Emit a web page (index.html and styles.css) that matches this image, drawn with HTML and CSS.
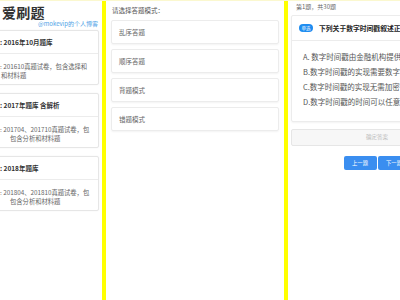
FILE: index.html
```html
<!DOCTYPE html>
<html lang="zh">
<head>
<meta charset="utf-8">
<title>爱刷题</title>
<link rel="stylesheet" href="styles.css">
</head>
<body>
<div class="screens">
  <section class="panel panel-home">
    <h1 class="app-title">爱刷题</h1>
    <div class="blog-link">@mokevip的个人博客</div>
    <div class="bank-card">
      <div class="bank-head">: 2016年10月题库</div>
      <div class="bank-body">
        <div class="line">: 201610真题试卷，包含选择和</div>
        <div class="line">和材料题</div>
      </div>
    </div>
    <div class="bank-card">
      <div class="bank-head">: 2017年题库 含解析</div>
      <div class="bank-body">
        <div class="line">: 201704、201710真题试卷，包</div>
        <div class="line indent">包含分析和材料题</div>
      </div>
    </div>
    <div class="bank-card">
      <div class="bank-head">: 2018年题库</div>
      <div class="bank-body">
        <div class="line">: 201804、201810真题试卷，包</div>
        <div class="line indent">包含分析和材料题</div>
      </div>
    </div>
  </section>
  <div class="divider"></div>
  <section class="panel panel-mode">
    <div class="mode-label">请选择答题模式：</div>
    <div class="mode-item">乱序答题</div>
    <div class="mode-item">顺序答题</div>
    <div class="mode-item">背题模式</div>
    <div class="mode-item">错题模式</div>
  </section>
  <div class="divider"></div>
  <section class="panel panel-quiz">
    <div class="quiz-progress">第1题，共30题</div>
    <div class="quiz-card">
      <div class="quiz-head">
        <span class="badge">单选</span>
        <span class="question">下列关于数字时间戳叙述正确的是</span>
      </div>
      <div class="options">
        <div class="option">A. 数字时间戳由金融机构提供</div>
        <div class="option">B.数字时间戳的实现需要数字签名</div>
        <div class="option">C.数字时间戳的实现无需加密</div>
        <div class="option">D.数字时间戳的时间可以任意修改</div>
      </div>
    </div>
    <div class="confirm">确定答案</div>
    <div class="nav-row">
      <span class="nav-btn">上一题</span>
      <span class="nav-btn">下一题</span>
    </div>
  </section>
</div>
</body>
</html>
```
FILE: styles.css
```css
* { box-sizing: border-box; }
html, body {
  margin: 0;
  width: 400px;
  height: 300px;
  overflow: hidden;
  background: #ffffff;
}
body {
  font-family: "Noto Sans CJK SC", "Noto Sans", "Liberation Sans", sans-serif;
  color: #333;
}
.screens {
  display: flex;
  height: 300px;
  border-top: 1px solid #fbf8cf;
}
.panel {
  flex: none;
  width: 178px;
  overflow: hidden;
  white-space: nowrap;
}
.divider {
  flex: none;
  width: 4px;
  background: #ffff00;
}

/* left: home */
.panel-home {
  width: 108px;
  margin-left: -6px;
  padding: 0 3px 0 0;
}
.app-title {
  margin: 2px 0 0 8px;
  font-size: 14px;
  line-height: 18px;
  font-weight: 700;
  color: #333;
  letter-spacing: 0.3px;
}
.blog-link {
  margin-top: -1px;
  font-size: 6px;
  line-height: 8px;
  text-align: right;
  color: #4d9fe6;
  padding-right: 1px;
}
.bank-card {
  margin-top: 2px;
  border: 1px solid #e6e6e6;
  border-radius: 2px;
  box-shadow: 0 0 2px rgba(0,0,0,0.05);
  margin-bottom: 8px;
}
.bank-card + .bank-card { margin-top: 0; }
.bank-head {
  height: 23px;
  line-height: 22px;
  padding-left: 5px;
  font-size: 6.5px;
  font-weight: 700;
  color: #333;
  border-bottom: 1px solid #ececec;
}
.bank-body {
  padding: 8px 2px 4px 5px;
  font-size: 6.3px;
  line-height: 9px;
  color: #666;
}
.line:nth-child(2):not(.indent) { padding-left: 1px; }
.indent { padding-left: 10px; }

/* middle: mode */
.panel-mode {
  padding: 0 5px;
}
.mode-label {
  padding-top: 5px;
  font-size: 6.5px;
  line-height: 9px;
  color: #555;
  padding-left: 1px;
}
.mode-item {
  margin-top: 5px;
  height: 24px;
  line-height: 22px;
  padding-left: 7px;
  font-size: 6.5px;
  color: #666;
  border: 1px solid #ececec;
  border-radius: 2px;
  box-shadow: 0 1px 2px rgba(0,0,0,0.05);
}

/* right: quiz */
.panel-quiz {
  padding: 0 3px;
}
.quiz-progress {
  padding: 2px 0 0 5px;
  font-size: 6px;
  line-height: 8px;
  color: #666;
}
.quiz-card {
  margin-top: 4px;
  border: 1px solid #ececec;
  border-radius: 2px;
  box-shadow: 0 1px 2px rgba(0,0,0,0.05);
}
.quiz-head {
  display: flex;
  align-items: center;
  gap: 6px;
  height: 25px;
  padding: 0 7px;
  border-bottom: 1px solid #ececec;
}
.badge {
  flex: none;
  width: 14px;
  height: 8px;
  border-radius: 4px;
  background: #1e8cf0;
  color: #fff;
  font-size: 4.5px;
  line-height: 8px;
  text-align: center;
}
.question {
  font-size: 6.8px;
  font-weight: 700;
  color: #222;
}
.options {
  padding: 8px 0 12px 11px;
}
.option {
  font-size: 7.5px;
  line-height: 15px;
  color: #555;
}
.confirm {
  margin-top: 7px;
  height: 17px;
  line-height: 15px;
  text-align: center;
  font-size: 5.5px;
  color: #bcbcbc;
  background: #f7f7f7;
  border: 1px solid #e6e6e6;
  border-radius: 2px;
}
.nav-row {
  display: flex;
  justify-content: center;
  gap: 1px;
  margin-top: 10px;
}
.nav-btn {
  width: 33px;
  height: 14px;
  line-height: 14px;
  text-align: center;
  font-size: 5.3px;
  color: #fff;
  background: #3a8ef0;
  border-radius: 2px;
}
```
